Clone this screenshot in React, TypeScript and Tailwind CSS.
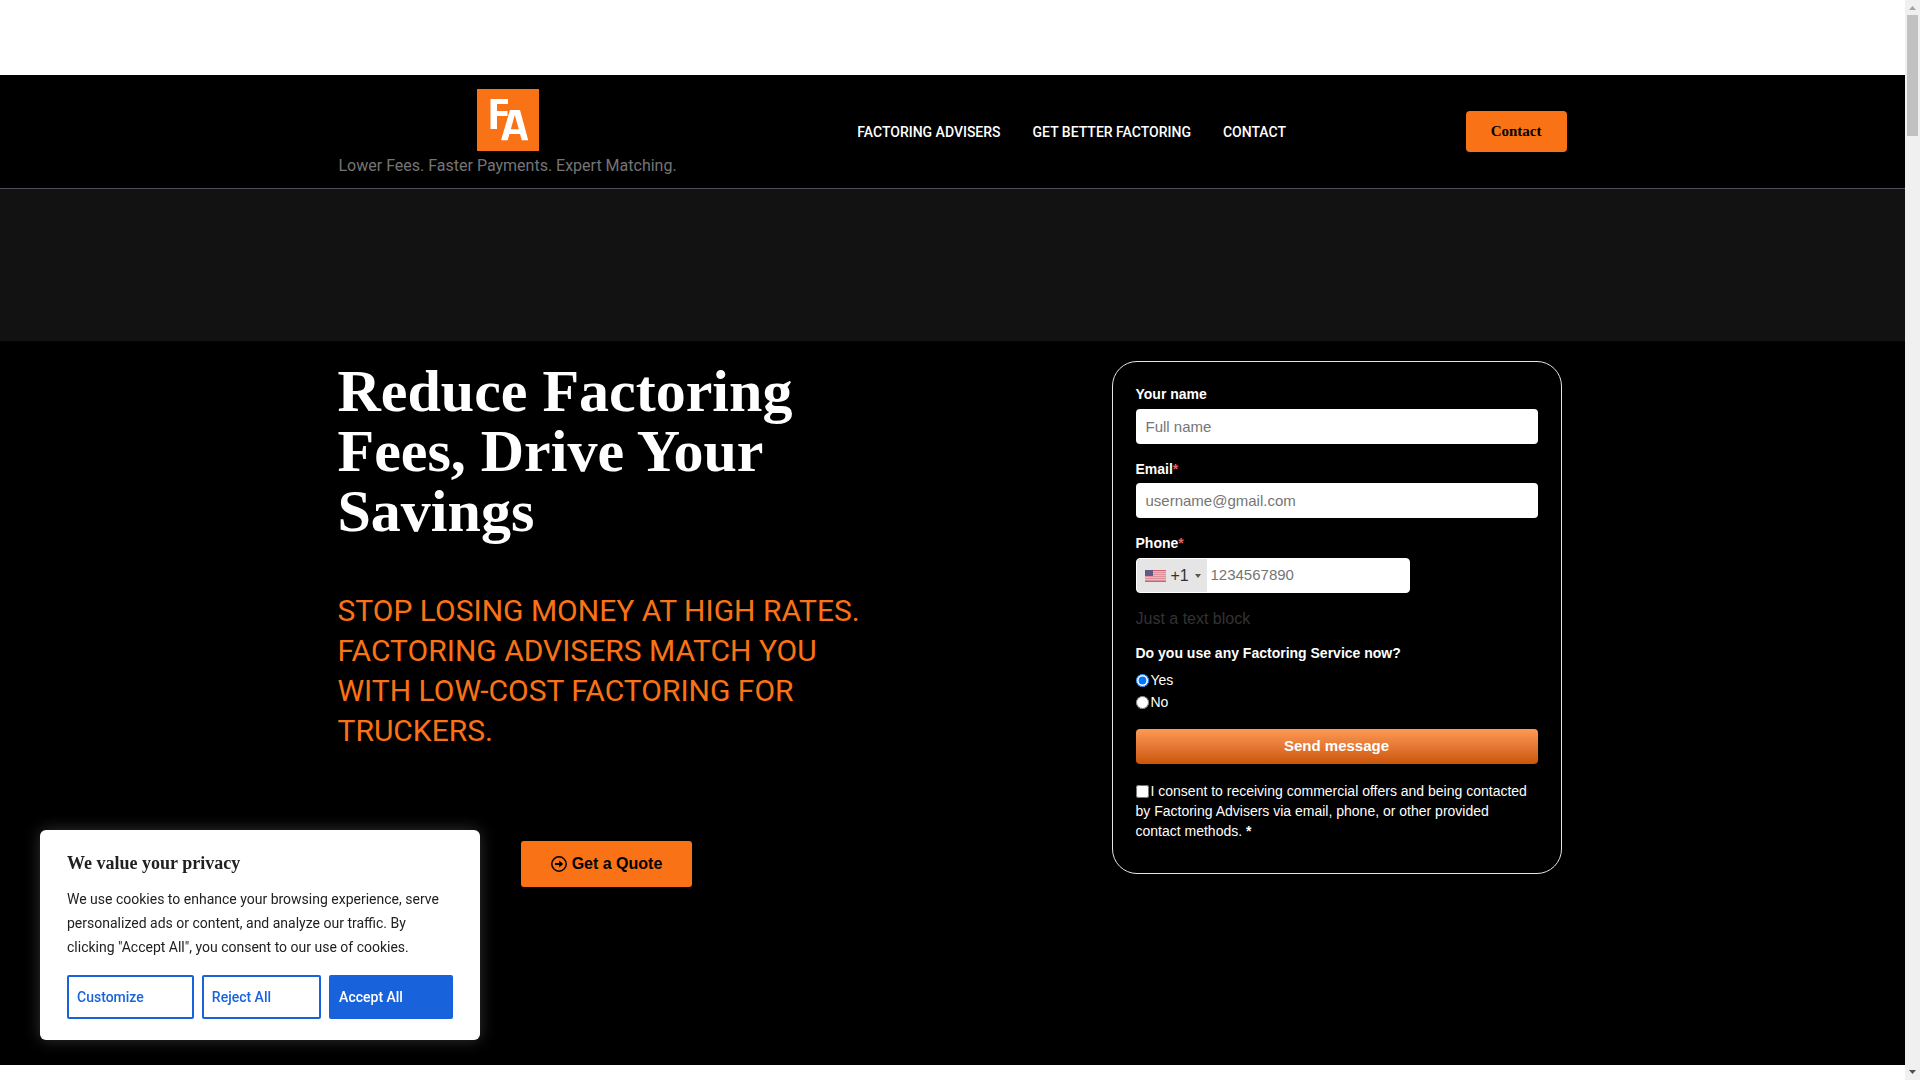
import { useState } from "react";

const sans = "font-['Liberation_Sans',Arial,sans-serif]";
const serif = "font-['Liberation_Serif','Times_New_Roman',serif]";

const navLinks = ["Factoring Advisers", "Get Better Factoring", "Contact"];

function Logo() {
  return (
    <svg className="h-[62px] w-[62px]" viewBox="0 0 62 62" role="img" aria-label="Factoring Advisers">
      <rect width="62" height="62" fill="#f97316" />
      <path d="M13.5 10H31V15H20V22H30.5V27H20V40H13.5Z" fill="#fff" />
      <path
        fillRule="evenodd"
        d="M33 21H43L51.2 51.2H44.8L43 45H32.5L30.6 51.2H24ZM37.8 26L33.8 40.3H41.8Z"
        fill="#fff"
      />
    </svg>
  );
}

function Header() {
  return (
    <header className="border-b border-[#4b4f58] bg-black">
      <div className="mx-auto flex max-w-[1230px] items-center justify-between pt-[10px] pr-px pb-[10px]">
        <div className="flex flex-col items-center gap-[3px] px-px pt-1">
          <a href="#">
            <Logo />
          </a>
          <p className="text-base text-[#757575]">Lower Fees. Faster Payments. Expert Matching.</p>
        </div>
        <nav className="flex gap-8 text-sm font-medium text-white uppercase">
          {navLinks.map((link) => (
            <a key={link} href="#">
              {link}
            </a>
          ))}
        </nav>
        <a href="#" className={`${serif} rounded bg-[#f97316] px-[25px] py-[10px] text-[15px] leading-[21px] font-bold text-black`}>
          Contact
        </a>
      </div>
    </header>
  );
}

function UsFlag() {
  return (
    <svg className="h-[12px] w-[21px]" viewBox="0 0 21 12" opacity="0.7" aria-hidden="true">
      <rect width="21" height="12" fill="#d9707e" />
      <path d="M0 1.5H21M0 3.5H21M0 5.5H21M0 7.5H21M0 9.5H21" stroke="#eab8be" strokeWidth="0.8" />
      <path d="M0 0.5H21M0 11.5H21" stroke="#c8283c" />
      <rect width="8" height="6" fill="#262262" />
    </svg>
  );
}

function QuoteForm() {
  const [usesFactoring, setUsesFactoring] = useState("yes");
  const label = "block text-sm leading-5 font-bold";
  const input =
    "block h-[35px] w-full rounded bg-white px-[10px] text-[15px] text-[#333] placeholder:text-[#757575]";

  return (
    <form
      className={`${sans} w-[450px] rounded-[25px] border border-[#e5e5e5] px-[23px] pt-[22px] pb-8 text-white`}
      onSubmit={(e) => e.preventDefault()}
    >
      <label htmlFor="name" className={label}>
        Your name
      </label>
      <input id="name" type="text" placeholder="Full name" className={`${input} mt-[5px]`} />

      <label htmlFor="email" className={`${label} mt-[15px]`}>
        Email<span className="text-[#e06666]">*</span>
      </label>
      <input id="email" type="email" placeholder="username@gmail.com" className={`${input} mt-1`} />

      <label htmlFor="phone" className={`${label} mt-[15px]`}>
        Phone<span className="text-[#e06666]">*</span>
      </label>
      <div className="mt-[5px] flex h-[35px] w-[274px] overflow-hidden rounded border border-white bg-white">
        <div className="relative w-[70px] shrink-0 bg-[#e5e5e5]">
          <select
            aria-label="Country code"
            className="h-full w-full appearance-none pl-[34px] text-base text-[#333]"
          >
            <option>+1</option>
          </select>
          <div className="pointer-events-none absolute inset-0 flex items-center justify-between pr-[6px] pl-[8px]">
            <UsFlag />
            <svg className="h-1 w-[6px]" viewBox="0 0 6 4" aria-hidden="true">
              <path d="M0 0H6L3 4Z" fill="#555" />
            </svg>
          </div>
        </div>
        <input
          id="phone"
          type="tel"
          placeholder="1234567890"
          className="min-w-0 flex-1 px-1 text-[15px] text-[#333] placeholder:text-[#757575]"
        />
      </div>

      <p className="mt-[14px] text-base text-[#333]">Just a text block</p>

      <fieldset className="mt-3">
        <legend className={label}>Do you use any Factoring Service now?</legend>
        <div className="mt-[7px] flex flex-col gap-[2px] text-sm">
          {["Yes", "No"].map((option) => (
            <label key={option} className="flex items-center gap-[2px]">
              <input
                type="radio"
                name="factoring"
                className="h-[13px] w-[13px]"
                checked={usesFactoring === option.toLowerCase()}
                onChange={() => setUsesFactoring(option.toLowerCase())}
              />
              {option}
            </label>
          ))}
        </div>
      </fieldset>

      <button
        type="submit"
        className="mt-[17px] h-[35px] w-full rounded bg-linear-to-b from-[#fd9a54] to-[#cb5504] text-[15px] font-bold text-white"
      >
        Send message
      </button>

      <label className="mt-[17px] block text-sm leading-5">
        <input type="checkbox" className="mr-[2px] h-[13px] w-[13px] align-[-2px]" />I consent to receiving
        commercial offers and being contacted by Factoring Advisers via email, phone, or other provided contact
        methods. <b>*</b>
      </label>
    </form>
  );
}

function Hero() {
  return (
    <section className="bg-black">
      <div className="mx-auto flex max-w-[1230px] items-start justify-between pt-5 pr-[6px] pb-[178px]">
        <div className="flex w-[538px] flex-col items-center">
          <h1 className={`${serif} w-full text-[60px] leading-[60px] font-bold text-white`}>
            Reduce Factoring Fees, Drive Your Savings
          </h1>
          <h2 className="mt-[50px] w-full text-[30px] leading-[40px] text-[#f97316] uppercase">
            Stop losing money at high rates. Factoring Advisers match you with low-cost factoring for truckers.
          </h2>
          <a
            href="#"
            className={`${sans} mt-[90px] flex h-[46px] items-center gap-[5px] rounded-[3px] bg-[#f97316] px-[30px] text-base font-bold text-black`}
          >
            <svg className="h-4 w-4" viewBox="0 0 16 16" fill="none" aria-hidden="true">
              <circle cx="8" cy="8" r="7.2" stroke="#000" strokeWidth="1.5" />
              <path d="M4 7.1H8.2V4.6L12.2 8L8.2 11.4V8.9H4Z" fill="#000" />
            </svg>
            Get a Quote
          </a>
        </div>
        <QuoteForm />
      </div>
    </section>
  );
}

function CookieBanner() {
  const button = "flex-auto rounded-[2px] border-2 border-[#1863dc] px-2 py-[10px] text-left leading-5";

  return (
    <div className="fixed bottom-10 left-10 w-[440px] rounded-md bg-white px-[27px] pt-[22px] pb-[21px] text-sm text-[#212121] shadow-[0_0_16px_#acabab4c]">
      <h3 className={`${serif} text-lg leading-[22px] font-bold`}>We value your privacy</h3>
      <p className="mt-[13px] leading-6">
        We use cookies to enhance your browsing experience, serve personalized ads or content, and analyze our
        traffic. By clicking "Accept All", you consent to our use of cookies.
      </p>
      <div className="mt-4 flex gap-2 font-medium">
        <button className={`${button} text-[#1863dc]`}>Customize</button>
        <button className={`${button} text-[#1863dc]`}>Reject All</button>
        <button className={`${button} bg-[#1863dc] text-white`}>Accept All</button>
      </div>
    </div>
  );
}

function Scrollbar() {
  return (
    <div className="sticky top-0 flex h-screen w-[15px] shrink-0 flex-col items-center bg-[#f0f0f0]">
      <svg className="h-[15px] w-[7px] shrink-0" viewBox="0 0 7 15" aria-hidden="true">
        <path d="M0 10H7L3.5 6Z" fill="#a3a3a3" />
      </svg>
      <div className="h-[121px] w-[11px] bg-[#c1c1c1]" />
      <svg className="mt-auto h-[15px] w-[7px] shrink-0" viewBox="0 0 7 15" aria-hidden="true">
        <path d="M0 5H7L3.5 9Z" fill="#505050" />
      </svg>
    </div>
  );
}

export default function App() {
  return (
    <div className="flex min-h-screen bg-white font-[Roboto,sans-serif]">
      <div className="flex min-w-0 flex-1 flex-col pt-[75px]">
        <Header />
        <div className="h-[152px] bg-[#121212]" />
        <main>
          <Hero />
        </main>
      </div>
      <Scrollbar />
      <CookieBanner />
    </div>
  );
}
